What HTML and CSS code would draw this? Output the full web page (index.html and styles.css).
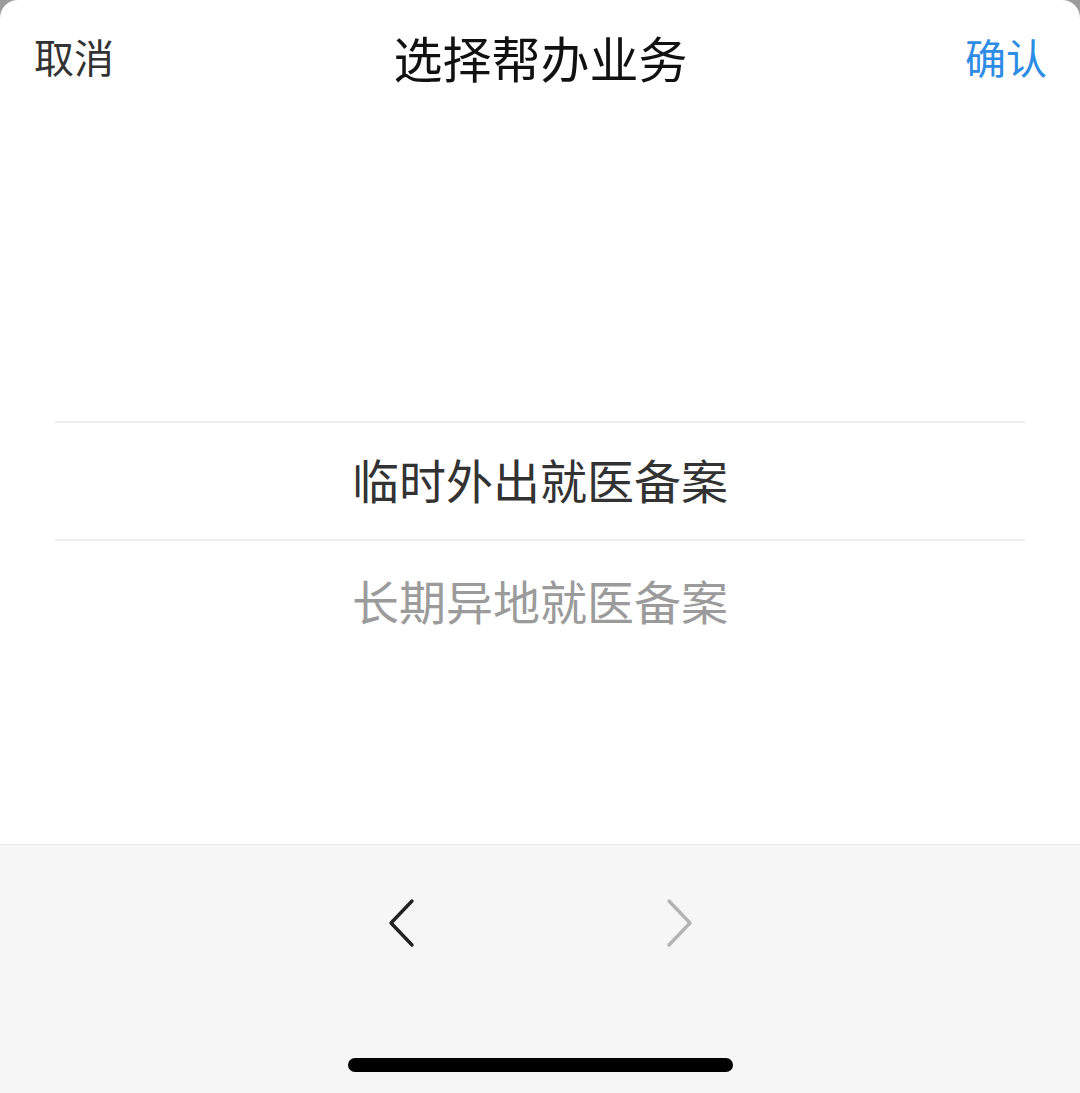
FILE: index.html
```html
<!DOCTYPE html>
<html lang="zh-CN">
<head>
  <meta charset="UTF-8" />
  <meta name="viewport" content="width=device-width, initial-scale=1.0" />
  <title>选择帮办业务</title>
  <link rel="stylesheet" href="styles.css">
</head>
<body>
  <div class="sheet">
    <div class="header">
      <span class="btn-cancel">取消</span>
      <span class="title">选择帮办业务</span>
      <span class="btn-confirm">确认</span>
    </div>

    <div class="picker">
      <div class="picker-item selected">临时外出就医备案</div>
      <div class="picker-item">长期异地就医备案</div>
    </div>

    <div class="toolbar">
      <div class="nav-row">
        <span class="nav-btn">
          <svg width="28" height="50" viewBox="0 0 28 50"><path d="M25 3 L4 25 L25 47" fill="none" stroke="#222" stroke-width="3.4" stroke-linecap="round" stroke-linejoin="round"/></svg>
        </span>
        <span class="nav-btn">
          <svg width="28" height="50" viewBox="0 0 28 50"><path d="M3 3 L24 25 L3 47" fill="none" stroke="#b4b4b4" stroke-width="3.4" stroke-linecap="round" stroke-linejoin="round"/></svg>
        </span>
      </div>
      <div class="home-bar"></div>
    </div>
  </div>
</body>
</html>
```

FILE: styles.css
```css
body {
  margin: 0;
  background-color: #9c9c9c;
  font-family: "Noto Sans CJK SC", "Noto Sans", sans-serif;
}
.sheet {
  height: 1093px;
  background-color: #ffffff;
  border-radius: 18px 18px 0 0;
  display: flex;
  flex-direction: column;
  overflow: hidden;
}
.header {
  height: 112px;
  padding: 0 33px 8px 34px;
  display: flex;
  align-items: center;
  justify-content: space-between;
}
.btn-cancel {
  font-size: 40px;
  color: #333;
  width: 160px;
}
.title {
  font-size: 49px;
  color: #111;
}
.btn-confirm {
  font-size: 41px;
  color: #2d8ce4;
  width: 160px;
  text-align: right;
}
.picker {
  flex: 1;
  padding-top: 301px;
}
.picker-item {
  height: 116px;
  padding-bottom: 6px;
  display: flex;
  align-items: center;
  justify-content: center;
  font-size: 47px;
  color: #9b9b9b;
}
.picker-item.selected {
  height: 110px;
  margin: 0 55px;
  border-top: 2px solid #ededed;
  border-bottom: 2px solid #ededed;
  color: #333;
}
.toolbar {
  height: 248px;
  background-color: #f6f6f6;
  border-top: 1px solid #e6e6e6;
  display: flex;
  flex-direction: column;
  align-items: center;
}
.nav-row {
  height: 156px;
  display: flex;
  align-items: center;
  justify-content: center;
  gap: 219px;
}
.nav-btn {
  width: 60px;
  display: flex;
  justify-content: center;
}
.home-bar {
  margin-top: 57px;
  width: 385px;
  height: 14px;
  border-radius: 7px;
  background-color: #000;
}
```
